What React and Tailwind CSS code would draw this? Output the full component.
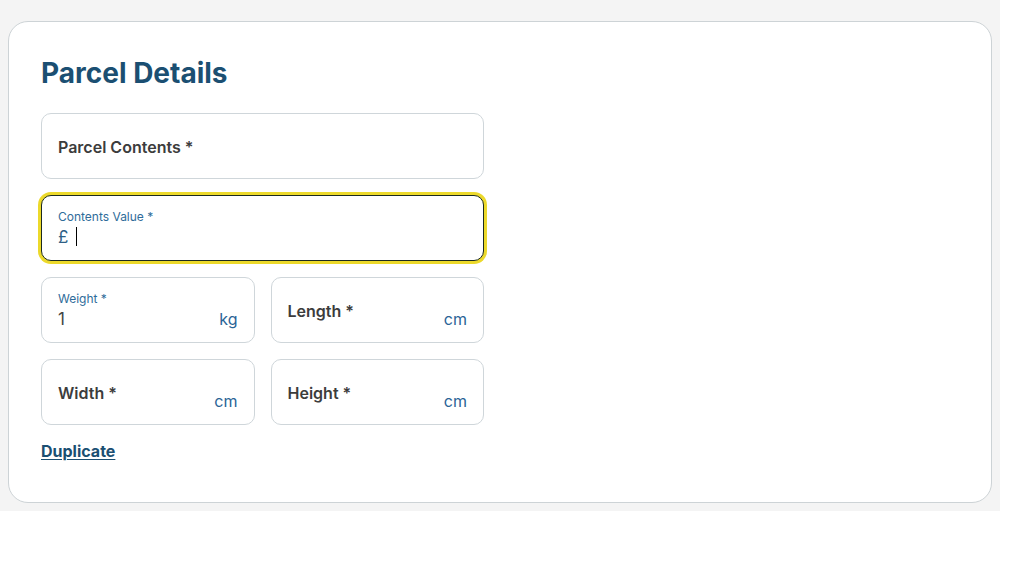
import React from "react";

const font = { fontFamily: "Inter, 'Noto Sans', sans-serif" };

function Field({ label, value, unit, floated, focused, caret }) {
  const box = focused
    ? "border border-[#1c2b1f] ring-[3px] ring-[#ecd92b]"
    : "border border-[#cfd6da]";
  return (
    <div className={`flex h-[66px] rounded-[10px] bg-white pl-4 pr-4 ${box}`}>
      <div className="flex flex-1 flex-col justify-center pt-px">
        {floated ? (
          <>
            <span className="text-[12px] leading-4 text-[#2f6c9a]">{label}</span>
            <span className="flex items-center text-[17px] leading-6 text-[#2f5f86]">
              {value}
              {caret && <span className="ml-2 h-[19px] w-px bg-black" />}
            </span>
          </>
        ) : (
          <span className="text-[16px] font-semibold leading-6 text-[#3c3c3c]">{label}</span>
        )}
      </div>
      {unit && (
        <span className="mb-[11px] self-end text-[16px] leading-6 text-[#2a6496]">{unit}</span>
      )}
    </div>
  );
}

export default function App() {
  return (
    <div style={font} className="w-[1000px] bg-[#f4f4f4] px-2 pb-2 pt-[21px]">
      <div className="rounded-[20px] border border-[#cdd3d6] bg-white pb-[39px] pl-8 pt-[33px]">
        <h1 className="mb-[22px] text-[28px] font-bold leading-9 text-[#1b4f72]">
          Parcel Details
        </h1>
        <div className="flex w-[443px] flex-col gap-4">
          <Field label="Parcel Contents *" />
          <Field label="Contents Value *" value="£" floated focused caret />
          <div className="grid grid-cols-2 gap-4">
            <Field label="Weight *" value={<span className="text-[#444]">1</span>} unit="kg" floated />
            <Field label="Length *" unit="cm" />
            <Field label="Width *" unit="cm" />
            <Field label="Height *" unit="cm" />
          </div>
        </div>
        <button className="mt-[14px] text-[16px] font-bold leading-6 text-[#1b4f72] underline underline-offset-2">
          Duplicate
        </button>
      </div>
    </div>
  );
}
